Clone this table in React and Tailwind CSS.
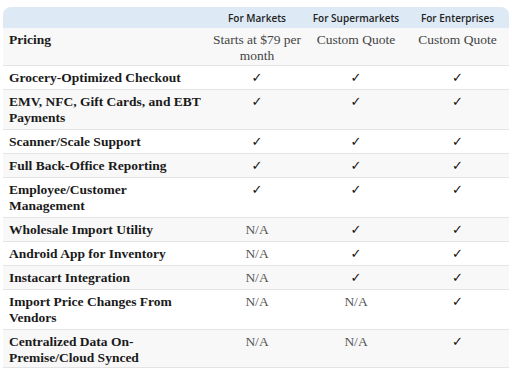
import React from "react";

const rows = [
  { label: ["Pricing"], cells: [["Starts at $79 per", "month"], ["Custom Quote"], ["Custom Quote"]] },
  { label: ["Grocery-Optimized Checkout"], cells: ["y", "y", "y"] },
  { label: ["EMV, NFC, Gift Cards, and EBT", "Payments"], cells: ["y", "y", "y"] },
  { label: ["Scanner/Scale Support"], cells: ["y", "y", "y"] },
  { label: ["Full Back-Office Reporting"], cells: ["y", "y", "y"] },
  { label: ["Employee/Customer", "Management"], cells: ["y", "y", "y"] },
  { label: ["Wholesale Import Utility"], cells: ["n", "y", "y"] },
  { label: ["Android App for Inventory"], cells: ["n", "y", "y"] },
  { label: ["Instacart Integration"], cells: ["n", "y", "y"] },
  { label: ["Import Price Changes From", "Vendors"], cells: ["n", "n", "y"] },
  { label: ["Centralized Data On-", "Premise/Cloud Synced"], cells: ["n", "n", "y"] },
];

function Lines({ lines }) {
  return lines.map((l, i) => (
    <span key={i} className="block whitespace-nowrap">
      {l}
    </span>
  ));
}

function Cell({ value }) {
  if (value === "y")
    return <span className="font-['DejaVu_Sans',sans-serif] text-[13px] text-[#111]">✓</span>;
  if (value === "n") return <span className="text-[#555]">N/A</span>;
  return <Lines lines={value} />;
}

export default function App() {
  return (
    <div className="w-[512px] h-[370px] bg-white pt-[7px] pl-[3px] font-['Liberation_Serif',serif] text-[13.5px] leading-[16px]">
      <div className="w-[506px]">
        <div className="grid grid-cols-[205px_98px_100px_103px] h-[21px] items-center bg-[#dde9f4] rounded-t-[8px] font-['Open_Sans',sans-serif] font-semibold text-[10px] text-[#222]">
          <div />
          <div className="text-center">For Markets</div>
          <div className="text-center">For Supermarkets</div>
          <div className="text-center">For Enterprises</div>
        </div>
        {rows.map((r, i) => (
          <div
            key={i}
            className={`grid grid-cols-[205px_98px_100px_103px] pt-[4px] border-b border-[#e4e4e4] ${i === 0 || i === rows.length - 1 ? "pb-[1px]" : "pb-[3px]"} ${i % 2 === 0 ? "bg-[#f8f8f8]" : "bg-white"}`}
          >
            <div className="pl-[6px] font-bold text-[#1a1a1a]">
              <Lines lines={r.label} />
            </div>
            {r.cells.map((c, j) => (
              <div key={j} className="text-center text-[#444]">
                <Cell value={c} />
              </div>
            ))}
          </div>
        ))}
      </div>
    </div>
  );
}
